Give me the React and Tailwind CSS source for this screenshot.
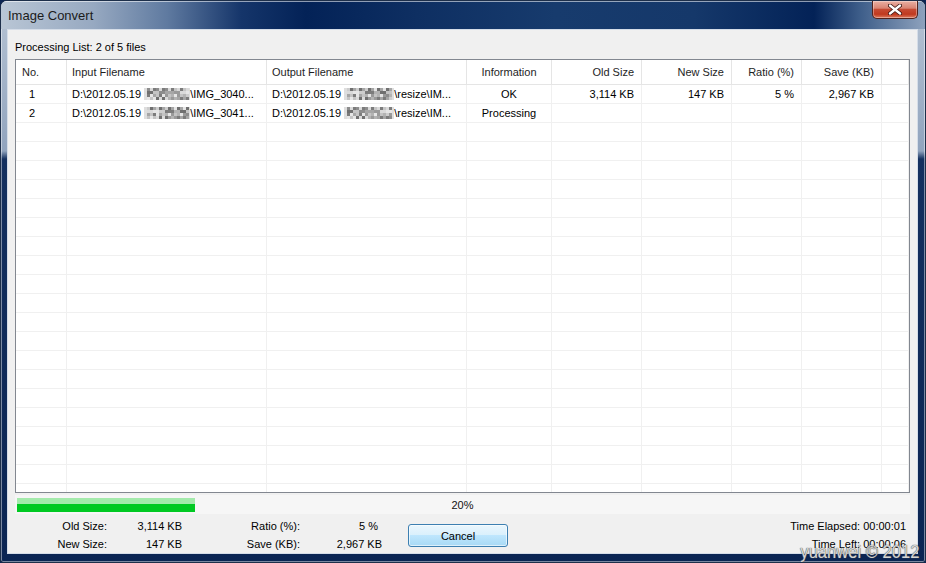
import React from 'react';

const cols = 'grid grid-cols-[51px_200px_200px_85px_90px_90px_70px_80px_1fr]';

const rows = [
  {
    no: '1',
    input: 'IMG_3040...',
    output: 'resize\\IM...',
    info: 'OK',
    oldSize: '3,114 KB',
    newSize: '147 KB',
    ratio: '5 %',
    save: '2,967 KB',
  },
  {
    no: '2',
    input: 'IMG_3041...',
    output: 'resize\\IM...',
    info: 'Processing',
    oldSize: '',
    newSize: '',
    ratio: '',
    save: '',
  },
];

// pixelated (blurred) part of the path
function Mosaic({ seed, width }) {
  const shades = ['#9a9a9a', '#c4c4c4', '#7c7c7c', '#dadada', '#8d8d8d', '#b3b3b3', '#e6e6e6', '#a6a6a6', '#707070', '#cdcdcd'];
  const cells = [];
  const n = Math.ceil(width / 3);
  for (let r = 0; r < 4; r++) {
    for (let c = 0; c < n; c++) {
      const k = (c * 7 + r * 3 + seed * 5 + ((c * (r + 2)) % 7)) % shades.length;
      const fill = c === 0 || c === n - 1 ? '#dedede' : shades[k];
      cells.push(<rect key={r + '-' + c} x={c * 3} y={r * 3} width="3" height="3" fill={fill} />);
    }
  }
  return (
    <svg width={width} height="12" viewBox={`0 0 ${width} 12`} className="inline-block shrink-0">
      {cells}
    </svg>
  );
}

function PathCell({ tail, seed, mosaic }) {
  return (
    <div className="flex items-center pl-[5px] border-r border-[#f0f0f0] whitespace-nowrap overflow-hidden">
      <span>D:\2012.05.19&nbsp;</span>
      <Mosaic seed={seed} width={mosaic} />
      <span>\{tail}</span>
    </div>
  );
}

const App = () => {
  const empty = Array.from({ length: 21 });

  return (
    <div className="w-[926px] h-[563px] bg-[#0b2553]">
      <div className="relative w-[926px] h-[563px] flex flex-col overflow-hidden rounded-t-[7px] rounded-b-[3px] border border-[#1d2f4a] bg-[linear-gradient(180deg,#b7c4d4_0px,#91a4be_150px,#14305f_158px,#0b2553_100%)] [box-shadow:inset_0_0_0_1px_rgba(255,255,255,0.45)] font-['Liberation_Sans',Arial,sans-serif] text-black">
        {/* Title bar */}
        <div className="h-[28px] shrink-0 flex items-center pl-[7px] bg-[linear-gradient(90deg,#b9c6d5_0%,#97a9c1_10%,#5f7aa0_18%,#15356a_26%,#032257_33%,#0e2f62_45%,#173b6d_60%,#15386a_75%,#032257_88%,#3e5e8a_93%,#8ea2bd_100%)] [box-shadow:inset_0_1px_0_rgba(255,255,255,0.55)]">
          <span className="text-[13px] text-[#1b1b1b] leading-none">Image Convert</span>
        </div>

        {/* Close button */}
        <div className="absolute right-[7px] top-0 w-[46px] h-[18px] flex items-center justify-center rounded-b-[5px] border border-t-0 border-[#52221c] bg-[linear-gradient(180deg,#eab0a3_0%,#d98473_42%,#c64a33_50%,#c0391f_78%,#dd7b5f_100%)] [box-shadow:inset_0_0_0_1px_rgba(255,255,255,0.35)]">
          <svg width="14" height="11" viewBox="0 0 14 11">
            <path d="M2 1.5 L12 9.5 M12 1.5 L2 9.5" stroke="#3a1410" strokeWidth="4" strokeLinecap="round" />
            <path d="M2 1.5 L12 9.5 M12 1.5 L2 9.5" stroke="#ffffff" strokeWidth="2.4" strokeLinecap="round" />
          </svg>
        </div>

        {/* Client area */}
        <div className="flex-1 ml-[6px] mr-[7px] mb-[8px] flex flex-col border border-[#d5dde8] bg-[#f0f0f0] px-[7px] text-[11px] min-h-0">
          <div className="h-[29px] shrink-0 flex items-end pb-[5px] leading-[13px]">Processing List: 2 of 5 files</div>

          {/* List view */}
          <div className="h-[434px] shrink-0 border border-[#828790] bg-white overflow-hidden">
            <div className={`${cols} h-[25px] border-b border-[#e5e5e5] text-[#1e1e1e]`}>
              <div className="flex items-center pl-[6px] border-r border-[#e5e5e5]">No.</div>
              <div className="flex items-center pl-[5px] border-r border-[#e5e5e5]">Input Filename</div>
              <div className="flex items-center pl-[5px] border-r border-[#e5e5e5]">Output Filename</div>
              <div className="flex items-center justify-center border-r border-[#e5e5e5]">Information</div>
              <div className="flex items-center justify-end pr-[7px] border-r border-[#e5e5e5]">Old Size</div>
              <div className="flex items-center justify-end pr-[7px] border-r border-[#e5e5e5]">New Size</div>
              <div className="flex items-center justify-end pr-[7px] border-r border-[#e5e5e5]">Ratio (%)</div>
              <div className="flex items-center justify-end pr-[7px] border-r border-[#e5e5e5]">Save (KB)</div>
              <div className="border-r border-[#e5e5e5]" />
            </div>

            {rows.map((r, i) => (
              <div key={r.no} className={`${cols} h-[19px] border-b border-[#f0f0f0]`}>
                <div className="flex items-center pl-[13px] border-r border-[#f0f0f0]">{r.no}</div>
                <PathCell tail={r.input} seed={i + 1} mosaic={46} />
                <PathCell tail={r.output} seed={i + 4} mosaic={50} />
                <div className="flex items-center justify-center border-r border-[#f0f0f0]">{r.info}</div>
                <div className="flex items-center justify-end pr-[7px] border-r border-[#f0f0f0]">{r.oldSize}</div>
                <div className="flex items-center justify-end pr-[7px] border-r border-[#f0f0f0]">{r.newSize}</div>
                <div className="flex items-center justify-end pr-[7px] border-r border-[#f0f0f0]">{r.ratio}</div>
                <div className="flex items-center justify-end pr-[7px] border-r border-[#f0f0f0]">{r.save}</div>
                <div className="border-r border-[#f0f0f0]" />
              </div>
            ))}

            {empty.map((_, i) => (
              <div key={i} className={`${cols} h-[19px] border-b border-[#f0f0f0]`}>
                <div className="border-r border-[#f0f0f0]" />
                <div className="border-r border-[#f0f0f0]" />
                <div className="border-r border-[#f0f0f0]" />
                <div className="border-r border-[#f0f0f0]" />
                <div className="border-r border-[#f0f0f0]" />
                <div className="border-r border-[#f0f0f0]" />
                <div className="border-r border-[#f0f0f0]" />
                <div className="border-r border-[#f0f0f0]" />
                <div className="border-r border-[#f0f0f0]" />
              </div>
            ))}
          </div>

          {/* Progress */}
          <div className="relative mt-[2px] h-[19px] shrink-0 bg-[#f6f6f6] pt-[3px] pl-[2px]">
            <div className="w-[178px] h-[14px] flex flex-col">
              <div className="h-[6px] bg-[#a3eaab]" />
              <div className="h-[8px] bg-[#00c922]" />
            </div>
            <div className="absolute inset-0 flex items-center justify-center pt-[2px] text-[#111]">20%</div>
          </div>

          {/* Summary */}
          <div className="flex pt-[3px] leading-[18px]">
            <div className="w-[92px] text-right">
              <div>Old Size:</div>
              <div>New Size:</div>
            </div>
            <div className="w-[75px] text-right">
              <div>3,114 KB</div>
              <div>147 KB</div>
            </div>
            <div className="w-[118px] text-right">
              <div>Ratio (%):</div>
              <div>Save (KB):</div>
            </div>
            <div className="w-[82px] text-right">
              <div className="pr-[4px]">5 %</div>
              <div>2,967 KB</div>
            </div>
            <div className="ml-[26px] mt-[7px] w-[100px] h-[23px] flex items-center justify-center rounded-[3px] border border-[#3c7fb1] bg-[linear-gradient(180deg,#eaf6fd_0%,#d9f0fc_50%,#bee6fd_50%,#a7d9f5_100%)] [box-shadow:inset_0_0_0_1px_rgba(255,255,255,0.6)] text-[11px]">
              Cancel
            </div>
            <div className="flex-1 text-right pr-[4px]">
              <div>Time Elapsed: 00:00:01</div>
              <div>Time Left: 00:00:06</div>
            </div>
          </div>
        </div>

        {/* watermark */}
        <div className="absolute right-[6px] bottom-[1px] text-[18px] leading-none whitespace-nowrap origin-right scale-x-[0.92] text-[#d6d6d6] [text-shadow:0_0_1px_#555,0_0_1px_#555]">
          yuanwei © 2012
        </div>
      </div>
    </div>
  );
};

export default App;
